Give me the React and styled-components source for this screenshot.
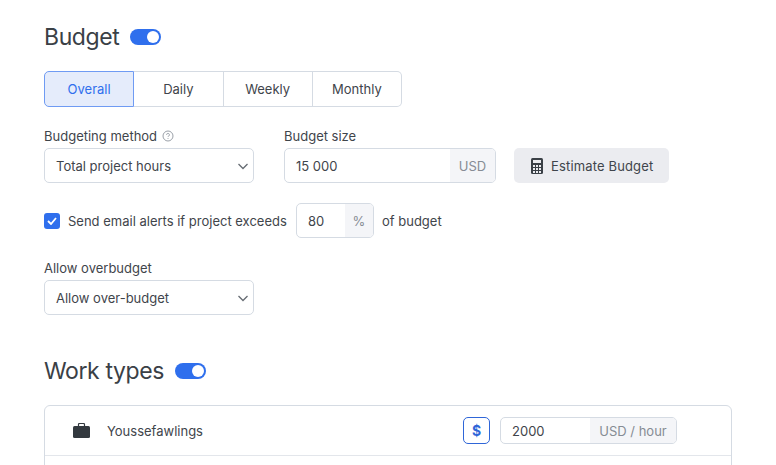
import styled, { createGlobalStyle } from "styled-components";

const Global = createGlobalStyle`
  html, body { margin: 0; padding: 0; background: #fff; overflow: hidden; }
  * { box-sizing: border-box; }
`;

const Page = styled.div`
  width: 776px;
  height: 465px;
  overflow: hidden;
  padding: 22px 44px 0;
  font-family: Inter, "Liberation Sans", sans-serif;
  font-size: 13px;
  color: #3f454b;
`;

const TitleRow = styled.div`
  display: flex;
  align-items: center;
  gap: 11px;
  height: 30px;
  margin-top: ${(p) => p.$top || 0}px;
`;

const Title = styled.h2`
  margin: 0;
  font-size: 23px;
  font-weight: 400;
  letter-spacing: -0.4px;
  line-height: 30px;
  color: #3a4046;
`;

const Toggle = styled.span`
  display: flex;
  justify-content: flex-end;
  align-items: center;
  width: 31px;
  height: 16px;
  padding: 2px;
  border-radius: 8px;
  background: #2f6fed;
  &::after {
    content: "";
    width: 12px;
    height: 12px;
    border-radius: 50%;
    background: #fff;
  }
`;

const Tabs = styled.div`
  display: flex;
  width: 358px;
  height: 36px;
  margin-top: 19px;
`;

const Tab = styled.div`
  flex: 1;
  display: flex;
  align-items: center;
  justify-content: center;
  border: 1px solid ${(p) => (p.$active ? "#6f9bf3" : "#d5dbe3")};
  border-left-width: ${(p) => (p.$active ? 1 : 0)}px;
  background: ${(p) => (p.$active ? "#e5ecfb" : "#fff")};
  color: ${(p) => (p.$active ? "#2f6fed" : "#3f454b")};
  border-radius: ${(p) => (p.$active ? "5px 0 0 5px" : p.$last ? "0 5px 5px 0" : "0")};
`;

const FormRow = styled.div`
  display: flex;
  align-items: flex-end;
  margin-top: ${(p) => p.$top}px;
`;

const Field = styled.div`
  display: flex;
  flex-direction: column;
  margin-right: ${(p) => p.$right || 0}px;
`;

const Label = styled.label`
  display: flex;
  align-items: center;
  gap: 5px;
  height: 18px;
  margin-bottom: 3px;
  line-height: 18px;
`;

const Select = styled.div`
  display: flex;
  align-items: center;
  justify-content: space-between;
  width: 210px;
  height: 35px;
  padding: 0 4px 0 11px;
  border: 1px solid #d5dbe3;
  border-radius: 5px;
`;

const InputGroup = styled.div`
  display: flex;
  width: ${(p) => p.$width}px;
  height: ${(p) => p.$height || 35}px;
  border: 1px solid #d5dbe3;
  border-radius: 5px;
  overflow: hidden;
`;

const InputValue = styled.div`
  flex: 1;
  display: flex;
  align-items: center;
  padding-left: 11px;
`;

const Addon = styled.div`
  display: flex;
  align-items: center;
  justify-content: center;
  width: ${(p) => p.$width}px;
  background: #f4f5f8;
  color: #868c94;
`;

const GrayButton = styled.button`
  display: flex;
  align-items: center;
  gap: 8px;
  width: 155px;
  height: 35px;
  margin-left: 18px;
  padding: 0 0 0 17px;
  border: 0;
  border-radius: 5px;
  background: #ebecf0;
  color: #3f454b;
  font: inherit;
  letter-spacing: 0.15px;
`;

const AlertRow = styled.div`
  display: flex;
  align-items: center;
  height: 35px;
  margin-top: 20px;
`;

const Checkbox = styled.span`
  display: flex;
  align-items: center;
  justify-content: center;
  width: 16px;
  height: 16px;
  margin-right: 8px;
  border-radius: 3px;
  background: #2f6fed;
`;

const AlertText = styled.span`
  width: 228px;
`;

const AfterText = styled.span`
  margin-left: 8px;
`;

const Card = styled.div`
  width: 688px;
  height: 120px;
  margin-top: 19px;
  border: 1px solid #d5dbe3;
  border-radius: 6px;
`;

const WorkRow = styled.div`
  display: flex;
  align-items: center;
  height: 50px;
  padding: 0 54px 0 28px;
  border-bottom: 1px solid #e3e6eb;
`;

const WorkName = styled.span`
  flex: 1;
  margin-left: 17px;
`;

const RateButton = styled.div`
  display: flex;
  align-items: center;
  justify-content: center;
  width: 27px;
  height: 27px;
  margin-right: 10px;
  border: 1px solid #2f66d8;
  border-radius: 5px;
  color: #2f66d8;
  font-size: 14px;
  font-weight: 700;
`;

const Chevron = () => (
  <svg width="12" height="12" viewBox="0 0 12 12" fill="none" stroke="#666c73" strokeWidth="1.300">
    <path d="M1.500 4l4.500 4.500L10.500 4" />
  </svg>
);

const HelpIcon = () => (
  <svg width="12" height="12" viewBox="0 0 12 12" fill="none" stroke="#9aa0a8" strokeWidth="1">
    <circle cx="6" cy="6" r="5" />
    <path d="M4.600 4.800a1.400 1.400 0 1 1 2.100 1.200c-.5.300-.7.500-.7 1" />
    <path d="M6 8.200v.8" />
  </svg>
);

const CalculatorIcon = () => (
  <svg width="12" height="16" viewBox="0 0 12 16">
    <rect width="12" height="16" rx="1.500" fill="#3a4046" />
    <rect x="2" y="2" width="8" height="3" fill="#ebecf0" />
    {[2, 5, 8].map((x) =>
      [7, 10, 13].map((y) => <rect key={`${x}-${y}`} x={x} y={y} width="2" height="2" fill="#ebecf0" />)
    )}
  </svg>
);

const BriefcaseIcon = () => (
  <svg width="17" height="15" viewBox="0 0 17 15">
    <path d="M5.500 3V1.500A1 1 0 0 1 6.500.5h4a1 1 0 0 1 1 1V3" fill="none" stroke="#33393f" strokeWidth="1.200" />
    <rect y="3" width="17" height="12" rx="1.500" fill="#33393f" />
  </svg>
);

const CheckIcon = () => (
  <svg width="10" height="8" viewBox="0 0 10 8" fill="none" stroke="#fff" strokeWidth="1.800">
    <path d="M1 4l3 3 5-6" />
  </svg>
);

export default function App() {
  return (
    <Page>
      <Global />
      <TitleRow>
        <Title>Budget</Title>
        <Toggle />
      </TitleRow>
      <Tabs>
        <Tab $active>Overall</Tab>
        <Tab>Daily</Tab>
        <Tab>Weekly</Tab>
        <Tab $last>Monthly</Tab>
      </Tabs>
      <FormRow $top={20}>
        <Field $right={30}>
          <Label>
            Budgeting method <HelpIcon />
          </Label>
          <Select>
            Total project hours <Chevron />
          </Select>
        </Field>
        <Field>
          <Label>Budget size</Label>
          <InputGroup $width={212}>
            <InputValue>15 000</InputValue>
            <Addon $width={45}>USD</Addon>
          </InputGroup>
        </Field>
        <GrayButton>
          <CalculatorIcon />
          Estimate Budget
        </GrayButton>
      </FormRow>
      <AlertRow>
        <Checkbox>
          <CheckIcon />
        </Checkbox>
        <AlertText>Send email alerts if project exceeds</AlertText>
        <InputGroup $width={78}>
          <InputValue>80</InputValue>
          <Addon $width={28}>%</Addon>
        </InputGroup>
        <AfterText>of budget</AfterText>
      </AlertRow>
      <FormRow $top={21}>
        <Field>
          <Label>Allow overbudget</Label>
          <Select>
            Allow over-budget <Chevron />
          </Select>
        </Field>
      </FormRow>
      <TitleRow $top={41}>
        <Title>Work types</Title>
        <Toggle />
      </TitleRow>
      <Card>
        <WorkRow>
          <BriefcaseIcon />
          <WorkName>Youssefawlings</WorkName>
          <RateButton>$</RateButton>
          <InputGroup $width={177} $height={27}>
            <InputValue>2000</InputValue>
            <Addon $width={86}>USD / hour</Addon>
          </InputGroup>
        </WorkRow>
      </Card>
    </Page>
  );
}
